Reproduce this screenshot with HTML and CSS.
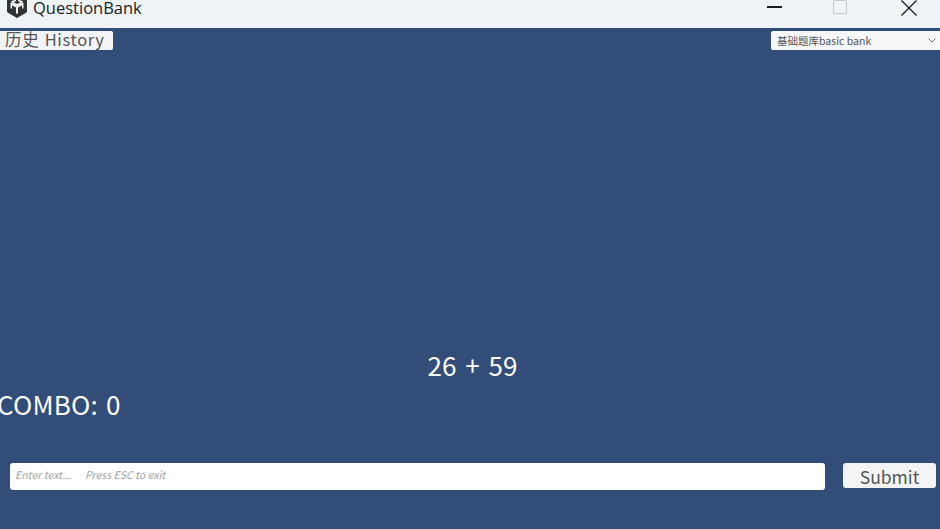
FILE: index.html
```html
<!DOCTYPE html>
<html lang="zh">
<head>
<meta charset="utf-8">
<title>QuestionBank</title>
<link rel="stylesheet" href="styles.css">
</head>
<body>
<div class="app">
  <header class="titlebar">
    <div class="brand">
      <svg class="logo" viewBox="0 0 22 22" width="22" height="22">
        <path d="M11 0.500 20.500 4.500V16L11 21.500 1.500 16V4.500Z" fill="#333" stroke="#333" stroke-width="1" stroke-linejoin="round"/>
        <path d="M11 2.500 12.500 5.500 16 7 17 5.500ZM11 2.500 9.500 5.500 6 7 5 5.500Z" fill="#e8eaee"/>
        <path d="M11 8 15 6 17.500 7V12L16 13V9.500L12 11.500V17L11 18 10 17V11.500L6 9.500V13L4.500 12V7L7 6Z" fill="#eef0f3"/>
      </svg>
      <span class="app-name">QuestionBank</span>
    </div>
    <div class="win-controls">
      <span class="win-btn"><span class="win-min"></span></span>
      <span class="win-btn"><span class="win-max"></span></span>
      <span class="win-btn">
        <svg viewBox="0 0 16 16" width="16" height="16"><path d="M0.500 0.500 15.500 15.500M15.500 0.500 0.500 15.500" stroke="#1c1c1c" stroke-width="1.300" fill="none"/></svg>
      </span>
    </div>
  </header>
  <main class="stage">
    <div class="topbar">
      <button class="history">历史 History</button>
      <div class="bank-select">
        <span>基础题库basic bank</span>
        <svg viewBox="0 0 8 5" width="8" height="5"><path d="M0.500 0.500 4 4 7.500 0.500" stroke="#777" stroke-width="1" fill="none"/></svg>
      </div>
    </div>
    <div class="question">26 + 59</div>
    <div class="combo">COMBO: 0</div>
    <div class="answer-row">
      <div class="answer-input"><span class="hint-a">Enter text...</span><span>Press ESC to exit</span></div>
      <button class="submit">Submit</button>
    </div>
  </main>
</div>
</body>
</html>
```
FILE: styles.css
```css
* { box-sizing: border-box; }
html, body { margin: 0; height: 100%; overflow: hidden; }
body { font-family: "Noto Sans CJK SC", "Noto Sans", sans-serif; background: #324d78; }
.app { width: 940px; height: 529px; display: flex; flex-direction: column; }
.titlebar { height: 28px; flex: none; background: #eef3f8; display: flex; justify-content: space-between; align-items: flex-start; }
.brand { display: flex; align-items: center; gap: 5px; padding-left: 6px; height: 16px; }
.logo { display: block; margin-top: -2px; }
.app-name { font-family: "Open Sans", sans-serif; font-size: 16.500px; color: #222; line-height: 16px; white-space: nowrap; }
.win-controls { display: flex; padding-right: 23px; gap: 45px; align-items: flex-start; }
.win-btn { display: flex; justify-content: center; height: 16px; }
.win-min { width: 15px; height: 2px; background: #1c1c1c; margin-top: 6px; margin-left: -4px; }
.win-max { width: 14px; height: 14px; border: 1px solid #c6cbd2; background: #f0f3f7; border-radius: 2px; margin-top: 0; }
.win-btn:nth-child(2) { margin-left: 6px; margin-right: 9px; }
.stage { flex: 1; display: flex; flex-direction: column; color: #fff; background: #324d78; }
.topbar { display: flex; justify-content: space-between; align-items: flex-start; padding-top: 3px; }
.history { width: 113px; height: 19px; border: 0; border-radius: 0 2px 2px 0; background: #f3f4f6; color: #555; font: 400 16.500px/17px "Noto Sans CJK SC", sans-serif; padding: 0 0 2px 5px; text-align: left; white-space: nowrap; letter-spacing: 0.650px; word-spacing: 1px; }
.bank-select { width: 169px; height: 19px; background: #f6f7f9; border-radius: 2px 0 0 2px; color: #555; font-size: 10.500px; line-height: 19px; padding: 0 4px 0 6px; display: flex; justify-content: space-between; align-items: center; white-space: nowrap; }
.question { margin-top: 298px; height: 34px; padding-left: 5px; text-align: center; font-size: 26px; line-height: 34px; word-spacing: 3px; }
.combo { margin-top: 4px; height: 36px; margin-left: -3px; font-size: 26px; line-height: 36px; white-space: nowrap; word-spacing: 2px; letter-spacing: 0.200px; }
.answer-row { margin-top: 41px; display: flex; align-items: flex-start; padding-left: 10px; }
.answer-input { width: 815px; height: 27px; background: #fff; border-radius: 3px; padding-left: 5px; display: flex; gap: 14px; color: #a2a2a2; font-style: italic; font-size: 10.500px; line-height: 24px; white-space: nowrap; }
.submit { margin: 0 0 0 18px; width: 93px; height: 25px; border: 0; border-radius: 3px; background: #f3f4f6; color: #555; font: 400 17.500px/25px "Noto Sans CJK SC", sans-serif; padding: 1px 0 0; }
```
